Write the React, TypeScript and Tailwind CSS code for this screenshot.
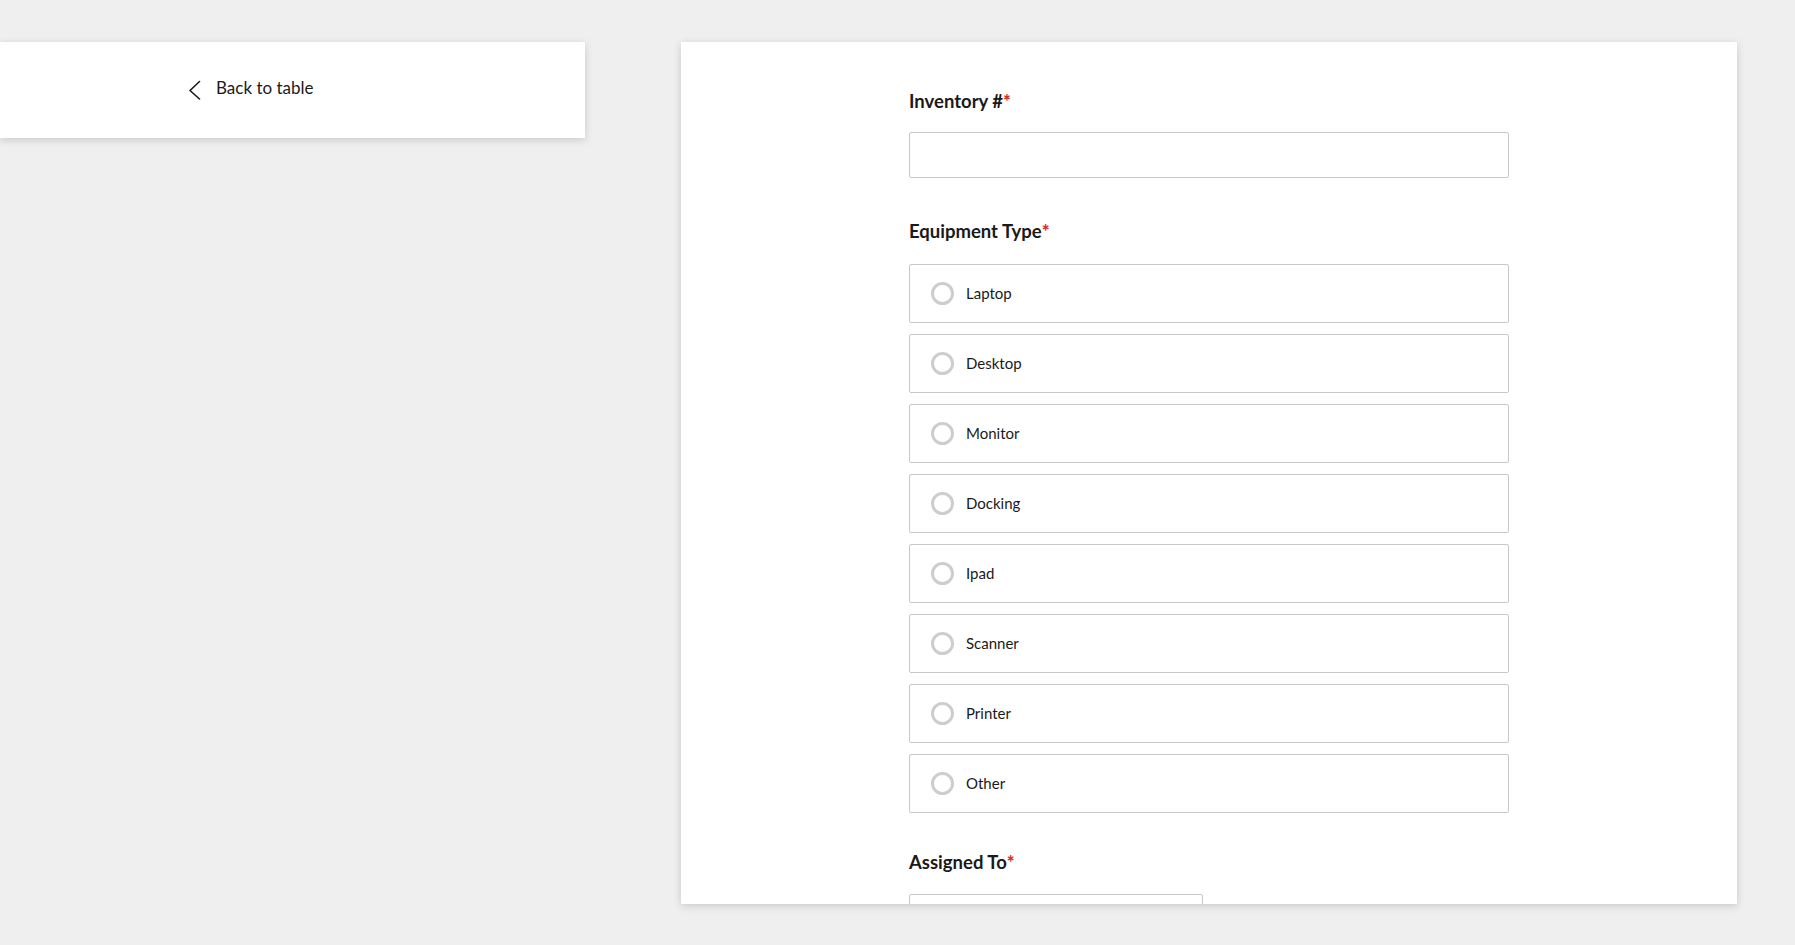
import React from "react";

const options = ["Laptop", "Desktop", "Monitor", "Docking", "Ipad", "Scanner", "Printer", "Other"];

function Label({ text }: { text: string }) {
  return (
    <div className="text-[18.5px] leading-[24px] font-bold text-[#1a1a1a]">
      {text}
      <span className="text-[#d3302b] font-black">*</span>
    </div>
  );
}

export default function App() {
  return (
    <div
      className="w-[1795px] h-[945px] bg-[#efefef] flex items-start pt-[42px] overflow-hidden"
      style={{ fontFamily: "Lato, 'Noto Sans', sans-serif" }}
    >
      <div className="w-[585px] h-[96px] bg-white shadow-[0_2px_8px_rgba(0,0,0,0.16)] flex items-center pb-[4px] pl-[188px] shrink-0">
        <div className="flex items-center gap-[15px] text-[#1a1a1a] cursor-pointer">
          <svg width="13" height="20" viewBox="0 0 13 20" fill="none" className="mt-[3px]">
            <path d="M11.5 1.5 L2 10.5 L11.5 19" stroke="#1a1a1a" strokeWidth="1.6" strokeLinecap="round" strokeLinejoin="round" />
          </svg>
          <span className="text-[17px] leading-[24px]">Back to table</span>
        </div>
      </div>

      <div className="ml-[96px] w-[1056px] h-[862px] bg-white shadow-[0_2px_8px_rgba(0,0,0,0.16)] overflow-hidden shrink-0">
        <div className="w-[600px] mx-auto pt-[47px]">
          <Label text="Inventory #" />
          <div className="mt-[19px] h-[46px] border border-[#c8c8c8] rounded-[2px]" />

          <div className="mt-[41px]">
            <Label text="Equipment Type" />
          </div>
          <div className="mt-[21px] flex flex-col gap-[11px]">
            {options.map((o) => (
              <div
                key={o}
                className="h-[59px] border border-[#c8c8c8] rounded-[2px] flex items-center pl-[21px] gap-[12px]"
              >
                <div className="w-[23px] h-[23px] rounded-full border-[3px] border-[#cdcdcd] shrink-0" />
                <span className="text-[15px] text-[#1a1a1a]">{o}</span>
              </div>
            ))}
          </div>

          <div className="mt-[37px]">
            <Label text="Assigned To" />
          </div>
          <div className="mt-[20px] w-[294px] h-[46px] border border-[#c8c8c8] rounded-[2px]" />
        </div>
      </div>
    </div>
  );
}
